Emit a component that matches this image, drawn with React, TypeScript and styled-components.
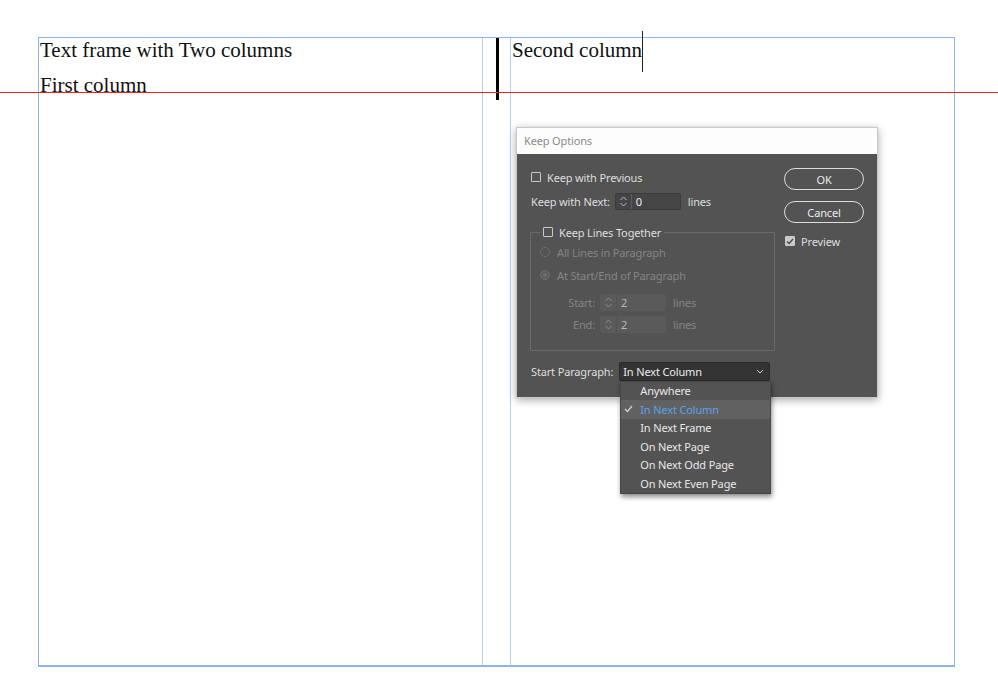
import React from "react";
import styled, { createGlobalStyle } from "styled-components";

const Global = createGlobalStyle`
  html, body { margin: 0; padding: 0; background: #ffffff; }
  body { font-family: "Liberation Serif", "Times New Roman", serif; }
`;

const Page = styled.div`
  position: relative;
  width: 998px;
  height: 696px;
  overflow: hidden;
  padding: 37px 0 0 38px;
  box-sizing: border-box;
`;

const Frame = styled.div`
  display: grid;
  grid-template-columns: 443px 29px 443px;
  width: 917px;
  height: 630px;
  box-sizing: border-box;
  border: 1px solid #8db4ee;
  border-bottom-width: 2px;
`;

const Column = styled.div`
  padding-left: 1px;
  font-family: "Liberation Serif", "Times New Roman", serif;
  font-size: 21px;
  color: #111;
`;

const Line = styled.p<{ $gap?: number }>`
  margin: ${(p) => p.$gap ?? 0}px 0 0 0;
  line-height: 24px;
  white-space: nowrap;
`;

const Gutter = styled.div`
  border-left: 1px solid #b7d0f2;
  border-right: 1px solid #b7d0f2;
  display: flex;
  justify-content: center;
  align-items: flex-start;
`;

const BreakBar = styled.div`
  width: 3px;
  height: 62px;
  background: #000;
  margin-left: 1px;
`;

const Caret = styled.span`
  display: inline-block;
  width: 1px;
  height: 41px;
  margin-top: -7px;
  vertical-align: top;
  background: #222;
`;

const BaselineGuide = styled.div`
  position: absolute;
  left: 0;
  right: 0;
  top: 92px;
  height: 1px;
  background: #e02424;
`;

/* ---------- Dialog ---------- */

const Dialog = styled.div`
  position: absolute;
  left: 516px;
  top: 127px;
  width: 362px;
  height: 271px;
  box-sizing: border-box;
  border: 1px solid #c9c9c9;
  background: #535353;
  box-shadow: 0 2px 8px rgba(0, 0, 0, 0.35);
  font-family: "Noto Sans", "Open Sans", sans-serif;
  font-size: 11px;
  letter-spacing: -0.15px;
  color: #dedede;
  display: flex;
  flex-direction: column;
`;

const TitleBar = styled.div`
  height: 26px;
  background: #fdfdfd;
  color: #8a8a8a;
  display: flex;
  align-items: center;
  padding: 0 0 2px 7px;
  box-sizing: border-box;
  flex-shrink: 0;
`;

const DialogBody = styled.div`
  flex: 1;
  display: flex;
  padding: 14px 13px 0 14px;
`;

const LeftPane = styled.div`
  width: 244px;
  display: flex;
  flex-direction: column;
`;

const RightPane = styled.div`
  width: 80px;
  margin-left: 9px;
  display: flex;
  flex-direction: column;
`;

const Row = styled.div<{ $top?: number; $indent?: number }>`
  display: flex;
  align-items: center;
  height: 18px;
  margin-top: ${(p) => p.$top ?? 0}px;
  padding-left: ${(p) => p.$indent ?? 0}px;
  white-space: nowrap;
`;

const Check = styled.span<{ $checked?: boolean }>`
  width: 10px;
  height: 10px;
  box-sizing: border-box;
  border: 1px solid #c9c9c9;
  border-radius: 1px;
  background: ${(p) => (p.$checked ? "#c9c9c9" : "transparent")};
  margin-right: 6px;
  display: inline-flex;
  align-items: center;
  justify-content: center;
  flex-shrink: 0;
`;

const Radio = styled.span<{ $filled?: boolean }>`
  width: 10px;
  height: 10px;
  box-sizing: border-box;
  border-radius: 50%;
  border: 1px solid #6e6e6e;
  background: ${(p) => (p.$filled ? "#6e6e6e" : "transparent")};
  box-shadow: ${(p) => (p.$filled ? "inset 0 0 0 2px #5d5d5d" : "none")};
  margin-right: 7px;
  flex-shrink: 0;
`;

const Label = styled.span<{ $dim?: boolean; $width?: number }>`
  color: ${(p) => (p.$dim ? "#858585" : "#dedede")};
  ${(p) => (p.$width ? `width: ${p.$width}px; text-align: right;` : "")}
`;

const Field = styled.div<{ $dim?: boolean }>`
  display: flex;
  align-items: center;
  width: 66px;
  height: 17px;
  box-sizing: border-box;
  background: ${(p) => (p.$dim ? "#5a5a5a" : "#454545")};
  border: 1px solid ${(p) => (p.$dim ? "#5a5a5a" : "#3b3b3b")};
  border-radius: 2px;
  margin: 0 7px 0 5px;
  color: ${(p) => (p.$dim ? "#b9b9b9" : "#eeeeee")};
`;

const Stepper = styled.span<{ $dim?: boolean }>`
  width: 15px;
  height: 100%;
  display: flex;
  align-items: center;
  justify-content: center;
  border-right: 1px solid ${(p) => (p.$dim ? "#535353" : "#5e5e5e")};
  margin-right: 4px;
`;

const Group = styled.fieldset`
  margin: 14px 0 0 -1px;
  padding: 0 0 17px 9px;
  border: 1px solid #6a6a6a;
  border-radius: 1px;
  min-width: 0;
  width: 245px;
  box-sizing: border-box;
`;

const Legend = styled.legend`
  padding: 0 3px;
  display: flex;
  align-items: center;
  height: 16px;
  color: #dedede;
`;

const SelectWrap = styled.div`
  position: relative;
  margin-left: 6px;
`;

const Select = styled.div`
  width: 151px;
  height: 19px;
  box-sizing: border-box;
  background: #343434;
  border: 1px solid #2b2b2b;
  border-radius: 2px;
  display: flex;
  align-items: center;
  justify-content: space-between;
  padding: 0 5px 0 3px;
  color: #ececec;
`;

const Menu = styled.div`
  position: absolute;
  left: 1px;
  top: 100%;
  width: 151px;
  box-sizing: border-box;
  background: #535353;
  border: 1px solid #474747;
  box-shadow: 1px 3px 5px rgba(0, 0, 0, 0.45);
  z-index: 2;
`;

const MenuItem = styled.div<{ $active?: boolean }>`
  position: relative;
  height: 18.5px;
  display: flex;
  align-items: center;
  padding-left: 19px;
  background: ${(p) => (p.$active ? "#616161" : "transparent")};
  color: ${(p) => (p.$active ? "#5aa2ea" : "#e8e8e8")};
`;

const Tick = styled.svg`
  position: absolute;
  left: 3px;
  top: 5px;
`;

const PillButton = styled.div<{ $top?: number }>`
  height: 22px;
  box-sizing: border-box;
  border: 1.5px solid #dcdcdc;
  border-radius: 11px;
  display: flex;
  align-items: center;
  justify-content: center;
  color: #ececec;
  margin-top: ${(p) => p.$top ?? 0}px;
`;

const StepperIcon = ({ color }: { color: string }) => (
  <svg width="9" height="13" viewBox="0 0 9 13">
    <path d="M1.5 5 L4.5 2 L7.5 5" fill="none" stroke={color} strokeWidth="1" />
    <path d="M1.5 8 L4.5 11 L7.5 8" fill="none" stroke={color} strokeWidth="1" />
  </svg>
);

const Spinner = ({ value, dim }: { value: string; dim?: boolean }) => (
  <Field $dim={dim}>
    <Stepper $dim={dim}>
      <StepperIcon color={dim ? "#8e8e8e" : "#bdbdbd"} />
    </Stepper>
    {value}
  </Field>
);

const menuItems = [
  "Anywhere",
  "In Next Column",
  "In Next Frame",
  "On Next Page",
  "On Next Odd Page",
  "On Next Even Page",
];

export default function App() {
  return (
    <>
      <Global />
      <Page>
        <Frame>
          <Column>
            <Line>Text frame with Two columns</Line>
            <Line $gap={11}>First column</Line>
          </Column>
          <Gutter>
            <BreakBar />
          </Gutter>
          <Column>
            <Line>
              Second column
              <Caret />
            </Line>
          </Column>
        </Frame>
        <BaselineGuide />

        <Dialog>
          <TitleBar>Keep Options</TitleBar>
          <DialogBody>
            <LeftPane>
              <Row>
                <Check />
                <Label>Keep with Previous</Label>
              </Row>
              <Row $top={6}>
                <Label>Keep with Next:</Label>
                <Spinner value="0" />
                <Label>lines</Label>
              </Row>
              <Group>
                <Legend>
                  <Check />
                  Keep Lines Together
                </Legend>
                <Row $top={3}>
                  <Radio />
                  <Label $dim>All Lines in Paragraph</Label>
                </Row>
                <Row $top={5}>
                  <Radio $filled />
                  <Label $dim>At Start/End of Paragraph</Label>
                </Row>
                <Row $top={9}>
                  <Label $dim $width={55}>Start:</Label>
                  <Spinner value="2" dim />
                  <Label $dim>lines</Label>
                </Row>
                <Row $top={4}>
                  <Label $dim $width={55}>End:</Label>
                  <Spinner value="2" dim />
                  <Label $dim>lines</Label>
                </Row>
              </Group>
              <Row $top={11}>
                <Label>Start Paragraph:</Label>
                <SelectWrap>
                  <Select>
                    In Next Column
                    <svg width="8" height="5" viewBox="0 0 8 5">
                      <path d="M1 1 L4 4 L7 1" fill="none" stroke="#cfcfcf" strokeWidth="1" />
                    </svg>
                  </Select>
                  <Menu>
                    {menuItems.map((item) => (
                      <MenuItem key={item} $active={item === "In Next Column"}>
                        {item === "In Next Column" && (
                          <Tick width="9" height="8" viewBox="0 0 9 8">
                            <path d="M1 4 L3.5 6.5 L8 1" fill="none" stroke="#cfcfcf" strokeWidth="1.3" />
                          </Tick>
                        )}
                        {item}
                      </MenuItem>
                    ))}
                  </Menu>
                </SelectWrap>
              </Row>
            </LeftPane>
            <RightPane>
              <PillButton>OK</PillButton>
              <PillButton $top={11}>Cancel</PillButton>
              <Row $top={9} $indent={1}>
                <Check $checked>
                  <svg width="8" height="7" viewBox="0 0 8 7">
                    <path d="M1 3.5 L3 5.5 L7 1" fill="none" stroke="#4a4a4a" strokeWidth="1.4" />
                  </svg>
                </Check>
                <Label>Preview</Label>
              </Row>
            </RightPane>
          </DialogBody>
        </Dialog>
      </Page>
    </>
  );
}
